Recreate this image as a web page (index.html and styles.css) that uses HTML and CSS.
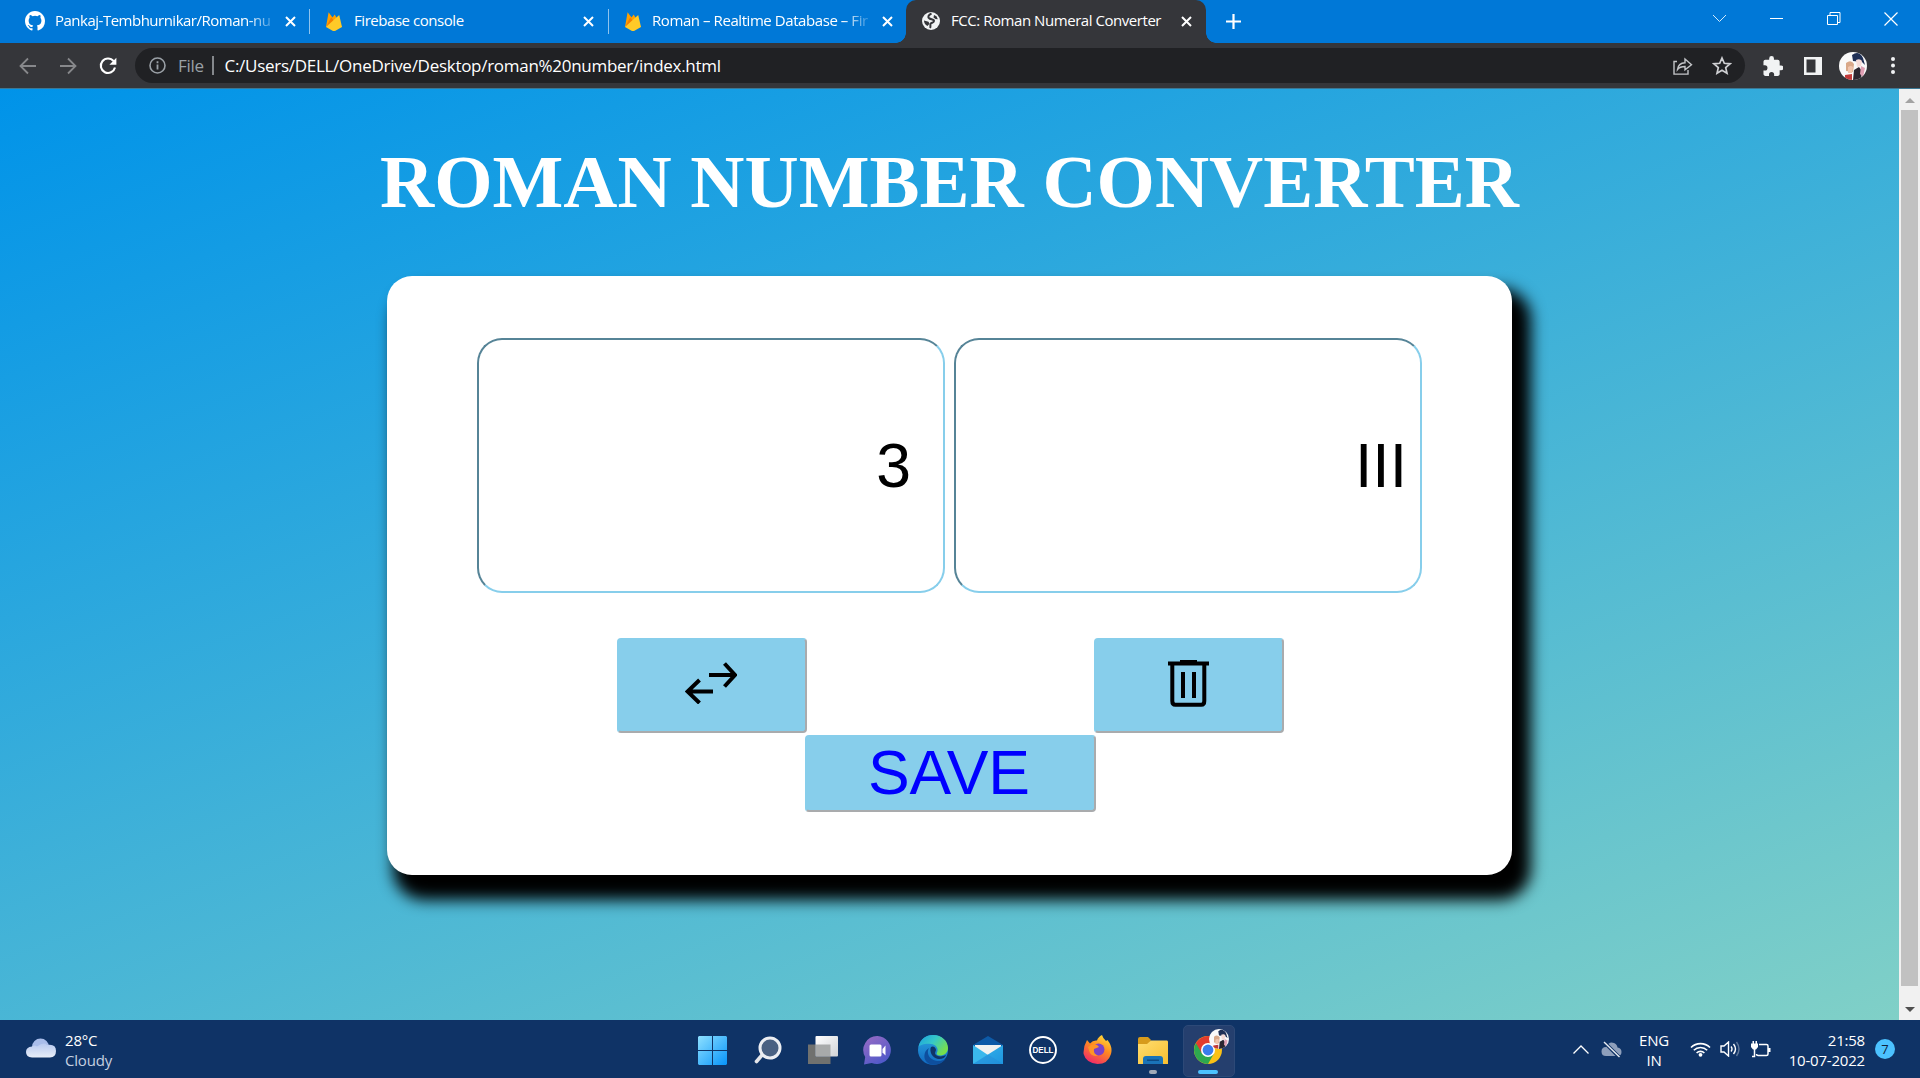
FILE: index.html
```html
<!DOCTYPE html>
<html lang="en">
<head>
<meta charset="utf-8">
<title>FCC: Roman Numeral Converter</title>
<link rel="stylesheet" href="styles.css">
</head>
<body>
<svg width="0" height="0" class="defs">
  <defs>
    <linearGradient id="gStart" x1="0" y1="0" x2="1" y2="1"><stop offset="0" stop-color="#8ee0ff"/><stop offset="1" stop-color="#0794fa"/></linearGradient>
    <linearGradient id="gView" x1="0" y1="0" x2="1" y2="1"><stop offset="0" stop-color="#fff"/><stop offset="1" stop-color="#d0d2d6"/></linearGradient>
    <linearGradient id="gChat" x1="0" y1="0" x2=".6" y2="1"><stop offset="0" stop-color="#9a6cc4"/><stop offset="1" stop-color="#5059c9"/></linearGradient>
    <linearGradient id="gEdge" x1="0" y1="0" x2="1" y2=".6"><stop offset="0" stop-color="#1aa0e0"/><stop offset=".5" stop-color="#36c8c8"/><stop offset="1" stop-color="#78e04a"/></linearGradient>
    <linearGradient id="gEdge2" x1="0" y1="0" x2="0" y2="1"><stop offset="0" stop-color="#2aa5e0"/><stop offset="1" stop-color="#1068c0"/></linearGradient>
    <linearGradient id="gFox" x1=".8" y1="0" x2=".3" y2="1"><stop offset="0" stop-color="#ffe03a"/><stop offset=".45" stop-color="#ff8a20"/><stop offset="1" stop-color="#f0286a"/></linearGradient>
    <linearGradient id="gMail" x1="0" y1="0" x2="1" y2="1"><stop offset="0" stop-color="#36b4ea"/><stop offset="1" stop-color="#1e96e0"/></linearGradient>
    <linearGradient id="gFold" x1="0" y1="0" x2="1" y2="1"><stop offset="0" stop-color="#ffdd70"/><stop offset="1" stop-color="#f8bf30"/></linearGradient>
    <linearGradient id="gCloud" x1="0" y1="0" x2="0" y2="1"><stop offset="0" stop-color="#b8caf0"/><stop offset="1" stop-color="#e8eef8"/></linearGradient>
    <clipPath id="round"><circle cx="14" cy="14" r="14"/></clipPath>
    <symbol id="flame" viewBox="0 0 16 20">
      <path fill="#ffa000" d="M0 16 2.600 1.200 6.500 6.500 8.700 3.500 16 16z"/>
      <path fill="#f57c00" d="M0 16 5.200 6.200 9 11z"/>
      <path fill="#ffca28" d="M0 16 13.200 4 16 16 9 20H7z"/>
    </symbol>
    <symbol id="cross" viewBox="0 0 11 11"><path d="M1 1 10 10M10 1 1 10" stroke="#fff" stroke-width="2" fill="none"/></symbol>
    <symbol id="face" viewBox="0 0 28 28">
      <g clip-path="url(#round)">
        <path fill="#fafafa" d="M0 0h28v28H0z"/>
        <path fill="#d9a98a" d="M7 11q5-4 8 1l-1 8-7-1z"/>
        <path fill="#f0c5ae" d="M9 15q3-2 5 0l-1 6H9z"/>
        <path fill="#1f3056" d="M13 3q7-5 11 3l2 7-3-3-9-1z"/>
        <path fill="#f6dcd8" d="M17 8q4-2 6 1l-1 5-4 1z"/>
        <path fill="#2b2630" d="M15 18l5-3 3 4-1 9h-8z"/>
        <path fill="#e0a0b4" d="M22 14l4 2-2 9-3-3z"/>
        <path fill="#c23a3a" d="M6 23l7-1v6H6z"/>
      </g>
    </symbol>
  </defs>
</svg>

<header class="tabs">
  <div class="tab tab-1">
    <svg class="gh" width="20" height="20" viewBox="0 0 16 16" fill="#fff"><path d="M8 0C3.580 0 0 3.580 0 8c0 3.540 2.290 6.530 5.470 7.590.4.070.55-.17.55-.38 0-.19-.01-.82-.01-1.490-2.010.37-2.530-.49-2.690-.94-.09-.23-.48-.94-.82-1.130-.28-.15-.68-.52-.01-.53.63-.01 1.080.58 1.230.82.72 1.210 1.870.87 2.330.66.07-.52.28-.87.51-1.070-1.780-.2-3.640-.89-3.640-3.950 0-.87.31-1.590.82-2.150-.08-.2-.36-1.020.08-2.120 0 0 .67-.21 2.200.82a7.600 7.600 0 0 1 4 0c1.530-1.040 2.200-.82 2.200-.82.44 1.100.16 1.920.08 2.120.51.56.82 1.270.82 2.150 0 3.070-1.870 3.750-3.650 3.950.29.25.54.73.54 1.480 0 1.070-.01 1.930-.01 2.200 0 .21.15.46.55.38A8 8 0 0 0 16 8c0-4.420-3.580-8-8-8z"/></svg>
    <span class="tab-title fade">Pankaj-Tembhurnikar/Roman-nu</span>
    <svg class="x" width="11" height="11"><use href="#cross"/></svg>
  </div>
  <div class="tab tab-2">
    <svg width="16" height="20"><use href="#flame"/></svg>
    <span class="tab-title">Firebase console</span>
    <svg class="x" width="11" height="11"><use href="#cross"/></svg>
  </div>
  <div class="tab tab-3">
    <svg width="16" height="20"><use href="#flame"/></svg>
    <span class="tab-title fade">Roman – Realtime Database – Fir</span>
    <svg class="x" width="11" height="11"><use href="#cross"/></svg>
  </div>
  <div class="tab tab-active">
    <svg width="18" height="18" viewBox="0 0 18 18"><circle cx="9" cy="9" r="9" fill="#f1f3f4"/><path fill="none" stroke="#35363a" stroke-width="2" d="M9.500 1.500C6 3 5.500 5.500 7.500 6.500S12 7 12 9s-3 1.500-3.500 3 .5 2.500-.5 4"/><path fill="#35363a" d="M2 8.500l4.500 1.200 1 2L5.500 14Q2 12 2 8.500zM12 3l2.500 1.300 1.300 3-2.300-.3-2-1.500z"/></svg>
    <span class="tab-title">FCC: Roman Numeral Converter</span>
    <svg class="x" width="11" height="11"><use href="#cross"/></svg>
  </div>
  <svg class="plus" width="15" height="15" viewBox="0 0 15 15"><path d="M7.500 0v15M0 7.500h15" stroke="#fff" stroke-width="2.200"/></svg>
  <div class="win">
    <svg width="15" height="9" viewBox="0 0 15 9"><path d="M1 1l6.500 6.500L14 1" fill="none" stroke="#d4eafa"/></svg>
    <svg width="13" height="9" viewBox="0 0 13 9"><path d="M0 4.500h13" stroke="#fff"/></svg>
    <svg width="14" height="14" viewBox="0 0 14 14"><path d="M.5 3.500h10v9H.5zM3 3.500v-3h10v10h-2.500" fill="none" stroke="#fff"/></svg>
    <svg width="14" height="14" viewBox="0 0 14 14"><path d="M.5.500l13 13M13.500.500l-13 13" stroke="#fff" stroke-width="1.200"/></svg>
  </div>
</header>

<div class="toolbar">
  <div class="nav">
    <svg width="18" height="18" viewBox="0 0 18 18"><path d="M17 9H2M9 1.500 1.500 9 9 16.500" fill="none" stroke="#87888b" stroke-width="1.800"/></svg>
    <svg width="18" height="18" viewBox="0 0 18 18"><path d="M1 9h15M9 1.500 16.500 9 9 16.500" fill="none" stroke="#87888b" stroke-width="1.800"/></svg>
    <svg width="18" height="18" viewBox="0 0 18 18"><path d="M14.600 4.200A7.200 7.200 0 1 0 16 10.500" fill="none" stroke="#fff" stroke-width="2.100"/><path d="M17.400.8v7h-7z" fill="#fff"/></svg>
  </div>
  <div class="omni">
    <svg class="info" width="17" height="17" viewBox="0 0 17 17"><circle cx="8.500" cy="8.500" r="7.500" fill="none" stroke="#9aa0a6" stroke-width="1.600"/><path d="M8.500 7.500v5M8.500 4.200v2" stroke="#9aa0a6" stroke-width="1.800"/></svg>
    <span class="scheme">File</span>
    <i class="bar"></i>
    <span class="url">C:/Users/DELL/OneDrive/Desktop/roman%20number/index.html</span>
    <svg class="share" width="20" height="18" viewBox="0 0 20 18"><path d="M4 4.500H1v12.600h14V13M4.500 12.500C5 8.500 7.500 6 12 5.800V2l6.500 5.700-6.500 5.200V9.500c-3.500 0-5.800.8-7.500 3z" fill="none" stroke="#c3c5c8" stroke-width="1.400"/></svg>
    <svg width="20" height="19" viewBox="0 0 20 19"><path d="M10 2l2.300 5.300 5.700.5-4.300 3.800 1.300 5.600-5-3-5 3 1.300-5.600L2 7.800l5.700-.5z" fill="none" stroke="#cfd0d3" stroke-width="1.700"/></svg>
  </div>
  <div class="ext">
    <svg width="20" height="20" viewBox="1.500 1 21 21"><path fill="#f1f3f4" d="M20.500 11H19V7c0-1.100-.9-2-2-2h-4V3.500a2.500 2.500 0 0 0-5 0V5H4c-1.100 0-2 .9-2 2v3.800h1.500a2.700 2.700 0 0 1 0 5.400H2V20c0 1.100.9 2 2 2h3.800v-1.500a2.700 2.700 0 0 1 5.400 0V22H17c1.100 0 2-.9 2-2v-4h1.500a2.500 2.500 0 0 0 0-5z"/></svg>
    <svg width="18" height="18" viewBox="0 0 18 18"><path fill="#f1f3f4" fill-rule="evenodd" d="M0 0h18v18H0zM2.500 2.500v13h9v-13z"/></svg>
    <svg width="28" height="28"><use href="#face"/></svg>
    <svg width="4" height="17" viewBox="0 0 4 17" fill="#f1f3f4"><circle cx="2" cy="2" r="2"/><circle cx="2" cy="8.500" r="2"/><circle cx="2" cy="15" r="2"/></svg>
  </div>
</div>

<div class="viewport">
  <main class="page">
    <h1>ROMAN NUMBER CONVERTER</h1>
    <section class="card">
      <div class="fields">
        <div class="field number">3</div>
        <div class="field">III</div>
      </div>
      <div class="actions">
        <button class="btn swap"><svg width="52" height="42" viewBox="0 0 52 42"><path d="M24 13h24M39.500 1.500 50 13 39.500 24.500M28 29.500H4M14.500 18 2.500 29.500 14.500 41" fill="none" stroke="#000" stroke-width="4"/></svg></button>
        <button class="btn"><svg width="42" height="48" viewBox="0 0 42 48"><path d="M0 3.500h41M4.300 3v38q0 3.800 3 3.800h26q3 0 3-3.800V3M15 12v26M26 12v26" fill="none" stroke="#000" stroke-width="4"/><path d="M12 0h17v4H12z"/></svg></button>
      </div>
      <button class="btn save">SAVE</button>
    </section>
  </main>
  <div class="scroll">
    <svg width="10" height="5" viewBox="0 0 10 5"><path d="M0 5 5 0l5 5z" fill="#a3a3a3"/></svg>
    <div class="thumb"></div>
    <svg width="10" height="5" viewBox="0 0 10 5"><path d="M0 0l5 5 5-5z" fill="#505050"/></svg>
  </div>
</div>

<footer class="taskbar">
  <div class="weather">
    <svg width="30" height="20" viewBox="0 0 30 20"><path fill="#a9bdea" d="M6 9a8.500 8.500 0 0 1 17 0v5H6z"/><path fill="url(#gCloud)" d="M6 8.500q2.500-1.800 5 0Q18 3.500 21 7q9-1.500 9 6 0 6-6 6.500H6Q0 19 0 14q0-5 6-5.500z"/></svg>
    <div class="lines"><span>28°C</span><span class="dim">Cloudy</span></div>
  </div>
  <div class="apps">
    <div class="app"><svg width="29" height="29" viewBox="0 0 29 29"><path fill="url(#gStart)" d="M1 0h13v14H0V1zM15 0h13l1 1v13H15zM0 15h14v14H1l-1-1zM15 15h14v13l-1 1H15z"/></svg></div>
    <div class="app"><svg width="28" height="28" viewBox="0 0 28 28"><path d="M9 18 2.500 25.500" stroke="#e4e6ea" stroke-width="3.600" stroke-linecap="round"/><circle cx="16" cy="12" r="10" fill="#4a6182" stroke="#eceef2" stroke-width="3"/></svg></div>
    <div class="app"><svg width="30" height="28" viewBox="0 0 30 28"><rect x="7.500" width="22.500" height="20.500" rx="1" fill="url(#gView)"/><path fill="#70716f" d="M0 8.500h7.500v12H22.500v7.500H0z"/><path fill="#a8aaaa" d="M7.500 8.500h15v12h-15z"/></svg></div>
    <div class="app"><svg width="29" height="29" viewBox="0 0 29 29"><path fill="url(#gChat)" d="M14.500 0a14 14 0 1 1-5.800 27L1 28.500 2.200 21A14 14 0 0 1 14.500 0z"/><rect x="6.500" y="8.500" width="12" height="12" rx="1.500" fill="#fff"/><path fill="#fff" d="M19.500 13l3-3.500v10l-3-3z"/></svg></div>
    <div class="app"><svg width="30" height="30" viewBox="0 0 30 30"><circle cx="15" cy="15" r="15" fill="url(#gEdge2)"/><path fill="url(#gEdge)" d="M.5 12C2 4 8 0 15 0c9 0 15 6 15 13 0 5-4 7.500-8 7.500-3 0-4-1.500-3-3 2-4-1-8-6-8.500C7 8.300 2 10 .5 12z"/><path fill="#0e4f9e" d="M11 13c-3 5 0 12 8 13 3 .3 6-.5 8.500-2C24 29 18 30.500 13 29.500 4 27 5 16 11 13z"/><path fill="#103468" d="M13 12c2-1.500 5 .5 5 3-.5 2-1.500 3-.5 4.500 3 3 7.500 2 10.500.5-1 3-4 4.500-8 4-6-1-9-8-7-12z"/></svg></div>
    <div class="app"><svg width="30" height="28" viewBox="0 0 30 28"><path fill="#0d5aa7" d="M15 0 30 9v5H0V9z"/><path fill="#f2f2f0" d="M2 9h26v6l-13 6L2 15z"/><path fill="#3ab8ec" d="M0 9l18 12-18 7z"/><path fill="url(#gMail)" d="M30 9v19H0z"/><path fill="#2585d4" d="M15 18.500 30 28H0z" opacity=".35"/></svg></div>
    <div class="app"><svg width="28" height="28" viewBox="0 0 28 28"><circle cx="14" cy="14" r="13" fill="none" stroke="#fff" stroke-width="1.900"/><text class="dell" x="14" y="17.300" text-anchor="middle" textLength="21" lengthAdjust="spacingAndGlyphs">DELL</text></svg></div>
    <div class="app"><svg width="29" height="30" viewBox="0 0 29 30"><path fill="url(#gFox)" d="M4 5l3 3.500Q10 5 14 5.500 15 2 19 0q1 3.500 4 6l1.500-1Q30 12 28 19q-3 10-13.500 10Q3 28 .6 19 0 12 4 5z"/><circle cx="15.500" cy="14.500" r="6" fill="#7a42c8"/><path fill="#ff9426" d="M5 12q5-4 9-2l2 2-5 2q-1 5 4 6.500-7 2-9-5z"/></svg></div>
    <div class="app"><svg width="30" height="27" viewBox="0 0 30 27"><path fill="#d79b1c" d="M0 2q0-2 2-2h8l3 3-2 4H0z"/><path fill="url(#gFold)" d="M0 7h9l4-3.500h16q1 0 1 1.500v22H0z"/><path fill="#1a73b8" d="M5 27v-5q0-3 3-3h14q3 0 3 3v5z"/><path fill="#0d4a84" d="M9 22.500h12v1.500H9z"/></svg><i class="dot"></i></div>
    <div class="app open"><svg class="chrome" width="28" height="28" viewBox="0 0 28 28"><circle cx="14" cy="14" r="14" fill="#fbc116"/><path fill="#2da94f" d="M14 14 1.900 7A14 14 0 0 0 14 28l6-10.500z"/><path fill="#e33b2e" d="M14 7h12.100A14 14 0 0 0 1.900 7l6 10.500z"/><circle cx="14" cy="14" r="7" fill="#fff"/><circle cx="14" cy="14" r="5.400" fill="#3a7ded"/></svg><svg class="mini" width="20" height="20"><use href="#face"/></svg><i class="line"></i></div>
  </div>
  <div class="tray">
    <svg width="16" height="9" viewBox="0 0 16 9"><path d="M.5 8.500 8 1l7.500 7.500" fill="none" stroke="#fff" stroke-width="1.300"/></svg>
    <svg class="off" width="21" height="17" viewBox="0 0 21 17"><path fill="#8e9fbb" d="M5 6Q8 0 13 2q3 1 3.500 4.500 4 .5 4 4.500t-4 4H5Q.5 15 .5 10.500T5 6z"/><path d="M3 1l15 15" stroke="#0f3366" stroke-width="3.500"/><path d="M3 1l15.500 15" stroke="#e8ecf2" stroke-width="1.400"/></svg>
    <div class="lines lang"><span>ENG</span><span>IN</span></div>
    <svg class="wifi" width="21" height="16" viewBox="0 0 21 16"><path d="M1 6.500a13.500 13.500 0 0 1 19 0M3.800 9.300a9.500 9.500 0 0 1 13.400 0M6.600 12a5.500 5.500 0 0 1 7.800 0" fill="none" stroke="#fff" stroke-width="1.600"/><circle cx="10.500" cy="13.800" r="1.900" fill="#fff"/></svg>
    <svg class="vol" width="20" height="16" viewBox="0 0 20 16"><path d="M1 5h3l4.500-4v14L4 11H1zM11 5.500q2 2.500 0 5M13.500 3q4 5 0 10" fill="none" stroke="#fff" stroke-width="1.400"/><path d="M16.500 1q5 7 0 14" fill="none" stroke="#5f7799" stroke-width="1.400"/></svg>
    <svg class="bat" width="21" height="17" viewBox="0 0 21 17"><path d="M9 3.500h7.500q1.500 0 1.500 1.500v8q0 1.500-1.500 1.500H8Q6.500 14.500 6.500 13M4.500 6v9.500H2" fill="none" stroke="#fff" stroke-width="1.500"/><path fill="#fff" d="M18 7h2.500v4H18zM1 2.500h1.500V0H4v2.500h1.500V0H7v2.500h1V6L6 8.500H3L1 6z"/></svg>
    <div class="lines clock"><span>21:58</span><span>10-07-2022</span></div>
    <div class="badge">7</div>
  </div>
</footer>
</body>
</html>
```
FILE: styles.css
```css
* { box-sizing: border-box; }
body {
  margin: 0;
  height: 1078px;
  display: flex;
  flex-direction: column;
  overflow: hidden;
  font-family: "Open Sans", "Noto Sans", sans-serif;
  color: #fff;
}
svg { display: block; flex: none; }
.defs { position: absolute; }

/* tab strip */
.tabs { height: 43px; flex: none; display: flex; align-items: center; background: #0078d7; }
.tab { height: 43px; display: flex; align-items: center; flex: none; position: relative; padding-bottom: 1px; }
.tab-title { font-size: 15px; white-space: nowrap; overflow: hidden; flex: 1; letter-spacing: -0.45px; padding-bottom: 2px; }
.fade { -webkit-mask-image: linear-gradient(90deg, #000 86%, transparent); mask-image: linear-gradient(90deg, #000 86%, transparent); }
.tab-1 { width: 310px; padding-left: 25px; padding-right: 14px; }
.tab-1 .tab-title { margin: 0 6px 0 10px; letter-spacing: -0.5px; }
.tab-2 { width: 299px; padding-left: 16px; padding-right: 15px; }
.tab-2 .tab-title { margin: 0 11px 0 12px; }
.tab-3 { width: 297px; padding-left: 16px; padding-right: 13px; }
.tab-3 .tab-title { margin: 0 8px 0 11px; letter-spacing: -0.43px; }
.tab-1, .tab-2 { background: linear-gradient(#8fc4ee, #8fc4ee) right 9px / 1px 25px no-repeat; }
.tab-active { width: 300px; background: #35363a; border-radius: 10px 10px 0 0; padding-left: 16px; padding-right: 14px; }
.tab-active .tab-title { margin-left: 11px; }
.tab-active::before, .tab-active::after { content: ""; position: absolute; bottom: 0; width: 10px; height: 10px; }
.tab-active::before { left: -10px; background: radial-gradient(circle at 0 0, transparent 9.500px, #35363a 10px); }
.tab-active::after { right: -10px; background: radial-gradient(circle at 100% 0, transparent 9.500px, #35363a 10px); }
.plus { margin-left: 20px; }
.win { margin-left: auto; display: grid; grid-template-columns: repeat(4, 57.3px); justify-items: center; align-items: center; padding-bottom: 6px; }

/* address bar */
.toolbar { height: 46px; flex: none; display: flex; align-items: center; background: #35363a; border-bottom: 1px solid #3b7895; }
.nav { width: 135px; display: flex; gap: 22px; padding-left: 19px; }
.omni { width: 1610px; height: 35px; border-radius: 18px; background: #202124; display: flex; align-items: center; padding: 0 13px; font-size: 17px; }
.info { margin-left: 1px; }
.scheme { color: #9aa0a6; margin-left: 12px; width: 30px; letter-spacing: -0.3px; }
.bar { width: 1.5px; height: 19px; background: #85888c; margin-left: 4px; }
.url { margin-left: 11px; flex: 1; letter-spacing: -0.28px; }
.share { margin-right: 19px; }
.ext { display: flex; align-items: center; padding-left: 18px; gap: 21px; }
.ext svg:nth-child(3) { margin-left: -4px; }
.ext svg:nth-child(4) { margin-left: 3px; }

/* page */
.viewport { height: 931px; flex: none; display: flex; }
.page { width: 1899px; background: linear-gradient(160deg, #0093e9 0%, #80d0c7 100%); display: flex; flex-direction: column; align-items: center; }
h1 { margin: 50px 0 51px; font: bold 75px/86px "Liberation Serif", serif; white-space: nowrap; }
.card { width: 1125px; height: 599px; background: #fff; border-radius: 25px; box-shadow: 12.5px 18.75px 15px 6.25px #000; display: flex; flex-direction: column; align-items: center; padding-top: 62px; }
.fields { display: flex; gap: 9px; }
.field { width: 468px; height: 255px; border: 2px inset skyblue; border-radius: 25px; color: #000; font: 62.5px/251px "Liberation Sans", sans-serif; text-align: right; padding-right: 13px; }
.number { padding-right: 32px; }
.actions { display: flex; gap: 287px; margin: 45px 0 0 2px; }
.btn { display: flex; justify-content: center; align-items: center; width: 190px; height: 95px; padding: 0 1px 4px 0; background: skyblue; border: 2px solid; border-color: skyblue #a9abad #a9abad skyblue; border-radius: 4px; }
.swap { padding: 0 3px 6px 0; }
.save { width: 291px; height: 77px; margin: 2px 0 0 2px; padding: 0 3px 3px 0; color: #00f; font: 62.5px/70px "Liberation Sans", sans-serif; }
.scroll { width: 21px; background: #f1f1f1; display: flex; flex-direction: column; align-items: center; justify-content: space-between; padding: 9px 0 8px; }
.thumb { width: 17px; height: 876px; background: #c1c1c1; margin: 7px 0 21px; }

/* taskbar */
.taskbar { height: 58px; flex: none; background: #0f3366; display: grid; grid-template-columns: 685px 550px 685px; align-items: center; }
.weather { display: flex; align-items: center; gap: 9px; padding-left: 26px; }
.weather svg { margin-top: -3px; }
.lines { display: flex; flex-direction: column; font-size: 15px; line-height: 20px; letter-spacing: -0.2px; margin-top: 2px; }
.dim { color: #c5d0e0; }
.apps { display: flex; height: 58px; }
.app { width: 55px; height: 58px; display: flex; align-items: center; justify-content: center; position: relative; padding-top: 2px; }
.open::before { content: ""; position: absolute; left: 3px; top: 5px; width: 50px; height: 50px; border-radius: 5px; background: #253f6e; border: 1px solid #2d4977; }
.chrome { position: relative; }
.mini { position: absolute; left: 29px; top: 9px; }
.dot, .line { position: absolute; bottom: 4px; height: 4px; border-radius: 2px; }
.dot { width: 8px; background: #a0a9b8; }
.line { width: 20px; background: #4cc2ff; }
.dell { font: bold 9px "Liberation Sans", sans-serif; fill: #fff; }
.tray { display: flex; align-items: center; padding-left: 338px; }
.off { margin-left: 12px; }
.lang { width: 40px; margin-left: 12px; text-align: center; }
.wifi { margin-left: 16px; }
.vol { margin-left: 9px; }
.bat { margin-left: 10px; }
.clock { width: 94px; text-align: right; }
.badge { width: 20px; height: 20px; border-radius: 50%; background: #4cc2ff; color: #10233c; font-size: 13px; line-height: 20px; text-align: center; margin-left: 10px; }
```
